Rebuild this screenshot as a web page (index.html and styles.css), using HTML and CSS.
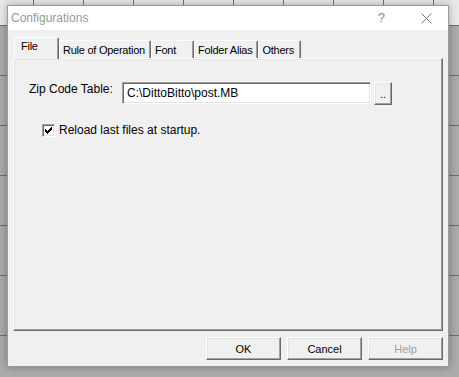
FILE: index.html
```html
<!DOCTYPE html>
<html lang="en">
<head>
  <meta charset="UTF-8">
  <title>Configurations</title>
  <link rel="stylesheet" href="styles.css">
</head>
<body>

<!-- Configurations dialog -->
<div class="dialog">
  <div class="titlebar">
    <span class="title">Configurations</span>
    <span class="help-mark">?</span>
    <svg class="close" width="11" height="11" viewBox="0 0 11 11"><path d="M0.5 0.5 L10.5 10.5 M10.5 0.5 L0.5 10.5"/></svg>
  </div>

  <div class="main">
    <!-- Tabs -->
    <div class="tabs">
      <div class="tab active">File</div>
      <div class="tab">Rule of Operation</div>
      <div class="tab">Font</div>
      <div class="tab">Folder Alias</div>
      <div class="tab">Others</div>
    </div>

    <!-- File page -->
    <div class="panel">
      <div class="field-row">
        <label class="field-label" for="zipTable">Zip Code Table:</label>
        <input class="field-input" id="zipTable" type="text" value="C:\DittoBitto\post.MB">
        <button class="browse">..</button>
      </div>
      <div class="check-row">
        <span class="checkbox">
          <svg width="7" height="7" viewBox="0 0 7 7"><path d="M0 2h1v3H0z M1 3h1v3H1z M2 4h1v3H2z M3 3h1v3H3z M4 2h1v3H4z M5 1h1v3H5z M6 0h1v3H6z"/></svg>
        </span>
        <span>Reload last files at startup.</span>
      </div>
    </div>

    <!-- Dialog buttons -->
    <div class="buttons">
      <button class="btn">OK</button>
      <button class="btn">Cancel</button>
      <button class="btn" disabled>Help</button>
    </div>
  </div>
</div>

</body>
</html>
```

FILE: styles.css
```css
* {
  box-sizing: border-box;
}
html, body {
  height: 100%;
}
body {
  margin: 0;
  padding: 5px 0 0 7px;
  overflow: hidden;
  font-family: "Liberation Sans", Arial, sans-serif;
  color: #000;
  background-color: #ababab;
  background-image:
    linear-gradient(to right, #767676 1px, transparent 1px),
    linear-gradient(to bottom,
      #e9e9e9 0 25px, #6d6d6d 25px 26px,
      transparent 26px 75px, #6d6d6d 75px 76px,
      transparent 76px 125px, #6d6d6d 125px 126px,
      transparent 126px 175px, #6d6d6d 175px 176px,
      transparent 176px 225px, #6d6d6d 225px 226px,
      transparent 226px 275px, #6d6d6d 275px 276px,
      transparent 276px 335px, #6d6d6d 335px 336px,
      transparent 336px);
  background-size: 50px 25px, 100% 100%;
  background-position: 33px 0, 0 0;
  background-repeat: repeat-x, no-repeat;
}
.dialog {
  width: 442px;
  height: 362px;
  border: 1px solid #9c9c9c;
  background: #f0f0f0;
  box-shadow: 0 0 8px rgba(0,0,0,0.3);
}
.titlebar {
  display: flex;
  align-items: center;
  height: 24px;
  padding-left: 3px;
  background: #fff;
}
.title {
  flex: 1;
  font-size: 12px;
  line-height: 22px;
  color: #999;
}
.help-mark {
  font-size: 13px;
  line-height: 22px;
  color: #8a8a8a;
  margin-right: 36px;
}
.close {
  margin-right: 16px;
}
.close path {
  stroke: #7a7a7a;
  stroke-width: 1;
  fill: none;
}
.main {
  height: 336px;
  padding: 7px 5px 6px 5px;
  display: flex;
  flex-direction: column;
}
.tabs {
  display: flex;
  align-items: flex-end;
  height: 21px;
  margin-left: 1px;
}
.tab {
  height: 18px;
  min-width: 43px;
  padding: 1px 5px 0 3px;
  font-size: 11px;
  letter-spacing: -0.25px;
  line-height: 16px;
  white-space: nowrap;
  border: 1px solid;
  border-bottom: 0;
  border-color: #fff #696969 transparent #fff;
  border-radius: 2px 2px 0 0;
  box-shadow: inset -1px 0 #a0a0a0;
}
.tab.active {
  position: relative;
  height: 22px;
  min-width: 45px;
  padding: 0 0 0 6px;
  margin-bottom: -1px;
  background: #f0f0f0;
}
.panel {
  height: 273px;
  padding: 23px 0 0 15px;
  border: 1px solid;
  border-color: #fff #696969 #696969 #fff;
  box-shadow: inset -1px -1px #a0a0a0, inset 1px 1px #e3e3e3;
}
.field-row {
  display: flex;
  align-items: flex-start;
  font-size: 12px;
}
.field-label {
  width: 93px;
  line-height: 14px;
}
.field-input {
  width: 249px;
  height: 22px;
  margin: 0;
  padding: 0 4px;
  font-family: "Liberation Sans", Arial, sans-serif;
  font-size: 12px;
  color: #000;
  background: #fff;
  border: 1px solid;
  border-color: #a0a0a0 #fff #fff #a0a0a0;
  box-shadow: inset 1px 1px #696969, inset -1px -1px #e3e3e3;
  outline: none;
}
.browse {
  width: 18px;
  height: 23px;
  margin: 0 0 0 3px;
  padding: 0;
  font-family: "Liberation Sans", Arial, sans-serif;
  font-size: 11px;
  line-height: 23px;
  background: #f0f0f0;
  border: 1px solid;
  border-color: #fff #696969 #696969 #fff;
  box-shadow: inset -1px -1px #a0a0a0, inset 1px 1px #e3e3e3;
}
.check-row {
  display: flex;
  align-items: center;
  gap: 4px;
  margin: 18px 0 0 13px;
  font-size: 12px;
}
.checkbox {
  display: flex;
  align-items: center;
  justify-content: center;
  width: 13px;
  height: 13px;
  background: #fff;
  border: 1px solid;
  border-color: #a0a0a0 #fff #fff #a0a0a0;
  box-shadow: inset 1px 1px #696969, inset -1px -1px #e3e3e3;
}
.checkbox path {
  fill: #000;
}
.buttons {
  display: flex;
  justify-content: flex-end;
  gap: 6px;
  margin-top: 6px;
}
.btn {
  width: 75px;
  height: 23px;
  padding: 0;
  font-family: "Liberation Sans", Arial, sans-serif;
  font-size: 11px;
  color: #000;
  background: #f0f0f0;
  border: 1px solid;
  border-color: #fff #696969 #696969 #fff;
  box-shadow: inset -1px -1px #a0a0a0, inset 1px 1px #e3e3e3;
}
.btn:disabled {
  color: #a0a0a0;
}
```
